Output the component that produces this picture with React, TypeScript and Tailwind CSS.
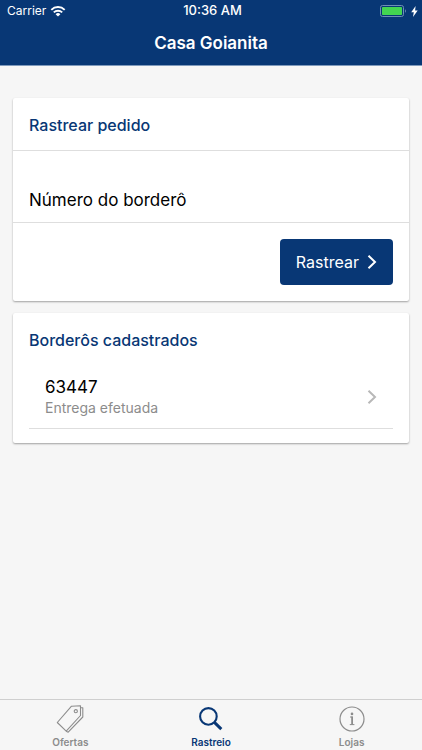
import { useState } from 'react';
import type { ReactNode } from 'react';

type TabId = 'ofertas' | 'rastreio' | 'lojas';

interface Bordero {
  numero: string;
  status: string;
}

const borderos: Bordero[] = [{ numero: '63447', status: 'Entrega efetuada' }];

function WifiIcon() {
  return (
    <svg className="w-4 h-3" viewBox="0 0 16 12" fill="none" stroke="currentColor" strokeWidth="1.9">
      <path d="M1.3 4.8a9.5 9.5 0 0 1 13.4 0" />
      <path d="M3.8 7.4a6 6 0 0 1 8.4 0" />
      <path d="M8 11.6 5.6 9.2a3.4 3.4 0 0 1 4.8 0Z" fill="currentColor" stroke="none" />
    </svg>
  );
}

function BatteryIcon() {
  return (
    <svg className="w-[27px] h-3" viewBox="0 0 27 12" fill="none">
      <rect x="0.5" y="0.5" width="23" height="11" rx="2" stroke="#6f8fb5" />
      <rect x="2" y="2" width="20" height="8" rx="0.8" fill="#43d551" />
      <path d="M25 4.2c1.2.6 1.2 3 0 3.6Z" fill="#6f8fb5" />
    </svg>
  );
}

function BoltIcon() {
  return (
    <svg className="w-[7px] h-[11px]" viewBox="0 0 7 11" fill="currentColor">
      <path d="M4.6 0 0.2 6.2h2.6L2 11l4.7-6.4H4.1Z" />
    </svg>
  );
}

function ChevronIcon({ className }: { className: string }) {
  return (
    <svg className={className} viewBox="0 0 10 16" fill="none" stroke="currentColor">
      <path d="M1.5 1.7 8 8l-6.5 6.3" />
    </svg>
  );
}

function TagsIcon() {
  return (
    <svg className="w-7 h-7" viewBox="0 0 28 28" fill="none" stroke="currentColor" strokeWidth="1.1" strokeLinejoin="round">
      <path d="M1.3 17.5 15.5 1.2l9-.4v9.7L10.2 26.2Z" />
      <path d="M24.8 2.8h2v9.2L12.2 27.2l-2-1" />
      <circle cx="19.8" cy="6.2" r="1.6" />
    </svg>
  );
}

function SearchIcon() {
  return (
    <svg className="w-7 h-7" viewBox="0 0 28 28" fill="none" stroke="currentColor">
      <circle cx="11.4" cy="11.4" r="8.3" strokeWidth="2.1" />
      <path d="m17.4 17.4 6.9 6.7" strokeWidth="3" />
    </svg>
  );
}

function InfoIcon() {
  return (
    <svg className="w-7 h-7" viewBox="0 0 28 28" fill="none" stroke="currentColor">
      <circle cx="14" cy="14" r="12" strokeWidth="1.2" />
      <circle cx="14" cy="8.9" r="1.3" fill="currentColor" stroke="none" />
      <path d="M14.1 11.6v8" strokeWidth="1.8" />
      <path d="M12 12h2.5M11.8 19.6h4.6" strokeWidth="1" />
    </svg>
  );
}

const tabs: { id: TabId; label: string; icon: ReactNode }[] = [
  { id: 'ofertas', label: 'Ofertas', icon: <TagsIcon /> },
  { id: 'rastreio', label: 'Rastreio', icon: <SearchIcon /> },
  { id: 'lojas', label: 'Lojas', icon: <InfoIcon /> },
];

export default function App() {
  const [tab, setTab] = useState<TabId>('rastreio');
  const [numero, setNumero] = useState('');

  return (
    <div className="min-h-screen flex flex-col bg-[#f6f6f6] font-['Inter',sans-serif] text-black">
      <header className="bg-[#083775] text-white border-b border-[#7f9abc]">
        {/* Status bar */}
        <div className="grid grid-cols-3 items-center h-[22px] pl-[7px] pr-1 text-xs">
          <div className="flex items-center gap-1">
            <span>Carrier</span>
            <WifiIcon />
          </div>
          <span className="text-center text-[13px] font-medium">10:36 AM</span>
          <div className="flex items-center justify-end gap-1">
            <BatteryIcon />
            <BoltIcon />
          </div>
        </div>
        <h1 className="h-[43px] text-center text-[17px] leading-[42px] font-semibold">Casa Goianita</h1>
      </header>

      <main className="flex-1 px-[13px] pt-8 space-y-3">
        <form
          className="bg-white rounded-xs shadow-[0_1px_2px_rgba(0,0,0,0.35)]"
          onSubmit={(e) => e.preventDefault()}
        >
          <h2 className="px-4 pt-[15px] pb-[13px] text-base font-medium text-[#083775]">Rastrear pedido</h2>
          <div className="flex items-center border-y border-[#dedede] px-4 pt-[35px] pb-2">
            <label htmlFor="bordero" className="text-[17px] leading-7">Número do borderô</label>
            <input
              id="bordero"
              type="text"
              value={numero}
              onChange={(e) => setNumero(e.target.value)}
              className="flex-1 min-w-0 pl-4 text-[17px] outline-none bg-transparent"
            />
          </div>
          <div className="flex justify-end p-4">
            <button
              type="submit"
              className="flex items-center gap-2 h-[46px] px-4 rounded bg-[#083775] text-white text-base"
            >
              Rastrear
              <ChevronIcon className="w-[10px] h-4 stroke-2" />
            </button>
          </div>
        </form>

        <section className="bg-white rounded-xs shadow-[0_1px_2px_rgba(0,0,0,0.35)] px-4 pt-[15px] pb-[14px]">
          <h2 className="text-base font-medium text-[#083775]">Borderôs cadastrados</h2>
          <ul className="pt-4">
            {borderos.map((b) => (
              <li key={b.numero} className="border-b border-[#dedede]">
                <button type="button" className="flex items-center justify-between w-full px-4 pt-2 pb-[10px] text-left">
                  <span>
                    <span className="block text-[17px] leading-[22px]">{b.numero}</span>
                    <span className="block text-sm leading-5 text-[#8c8c8c]">{b.status}</span>
                  </span>
                  <ChevronIcon className="w-[10px] h-4 stroke-2 text-[#b8b8b8]" />
                </button>
              </li>
            ))}
          </ul>
        </section>
      </main>

      <nav className="grid grid-cols-3 border-t border-[#cfcfcf] bg-[#f6f6f6]">
        {tabs.map((t) => (
          <button
            key={t.id}
            type="button"
            onClick={() => setTab(t.id)}
            className={`flex flex-col items-center h-[50px] pt-[5px] gap-[3px] text-[10px] leading-3 font-semibold ${
              tab === t.id ? 'text-[#083775]' : 'text-[#8c8c8c]'
            }`}
          >
            {t.icon}
            {t.label}
          </button>
        ))}
      </nav>
    </div>
  );
}
